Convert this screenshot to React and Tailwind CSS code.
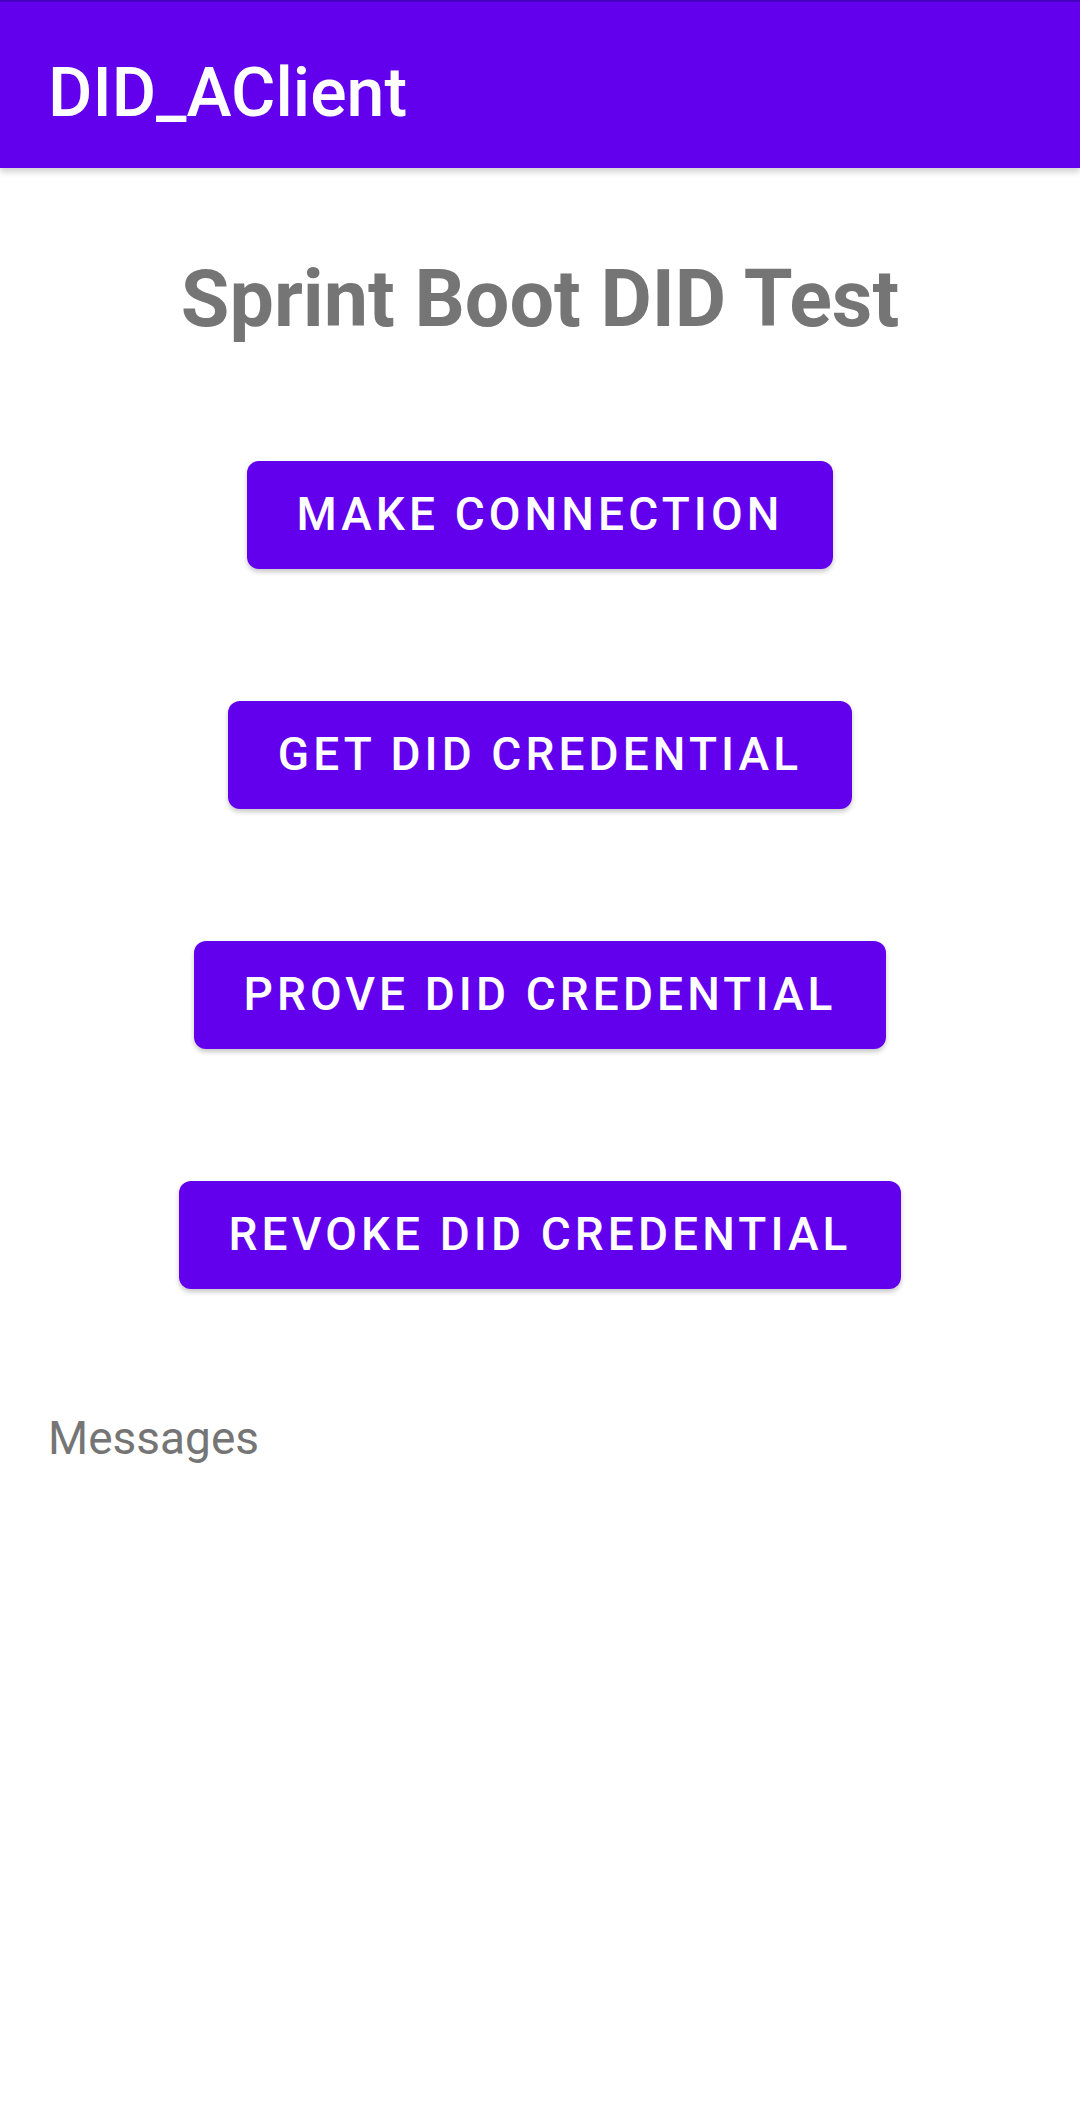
import React from 'react';

const buttons = [
  'MAKE CONNECTION',
  'GET DID CREDENTIAL',
  'PROVE DID CREDENTIAL',
  'REVOKE DID CREDENTIAL',
];

export default function App() {
  return (
    <div className="min-h-[2116px] w-[1080px] bg-white font-['Roboto',sans-serif]">
      {/* Toolbar */}
      <header className="h-[168px] bg-[#6200ee] border-t-[2px] border-[#4a00c0] shadow-[0_4px_6px_rgba(0,0,0,0.18)] pl-[48px] pt-[40px]">
        <h1 className="text-[68px] font-medium text-white leading-normal">DID_AClient</h1>
      </header>

      {/* Main content */}
      <main className="flex flex-col items-center">
        <h2 className="mt-[72px] text-[79px] font-bold text-[#757575] leading-normal">
          Sprint Boot DID Test
        </h2>

        <div className="mt-[102px] flex flex-col items-center gap-[132px]">
          {buttons.map((label) => (
            <button
              key={label}
              type="button"
              className="h-[108px] px-[50px] rounded-[12px] bg-[#6200ee] text-white text-[46px] font-medium tracking-[0.0892em] shadow-[0_3px_5px_rgba(0,0,0,0.22)]"
            >
              {label}
            </button>
          ))}
        </div>
      </main>

      {/* Messages */}
      <p className="mt-[115px] pl-[48px] text-[46px] text-[#757575] leading-normal">Messages</p>
    </div>
  );
}
